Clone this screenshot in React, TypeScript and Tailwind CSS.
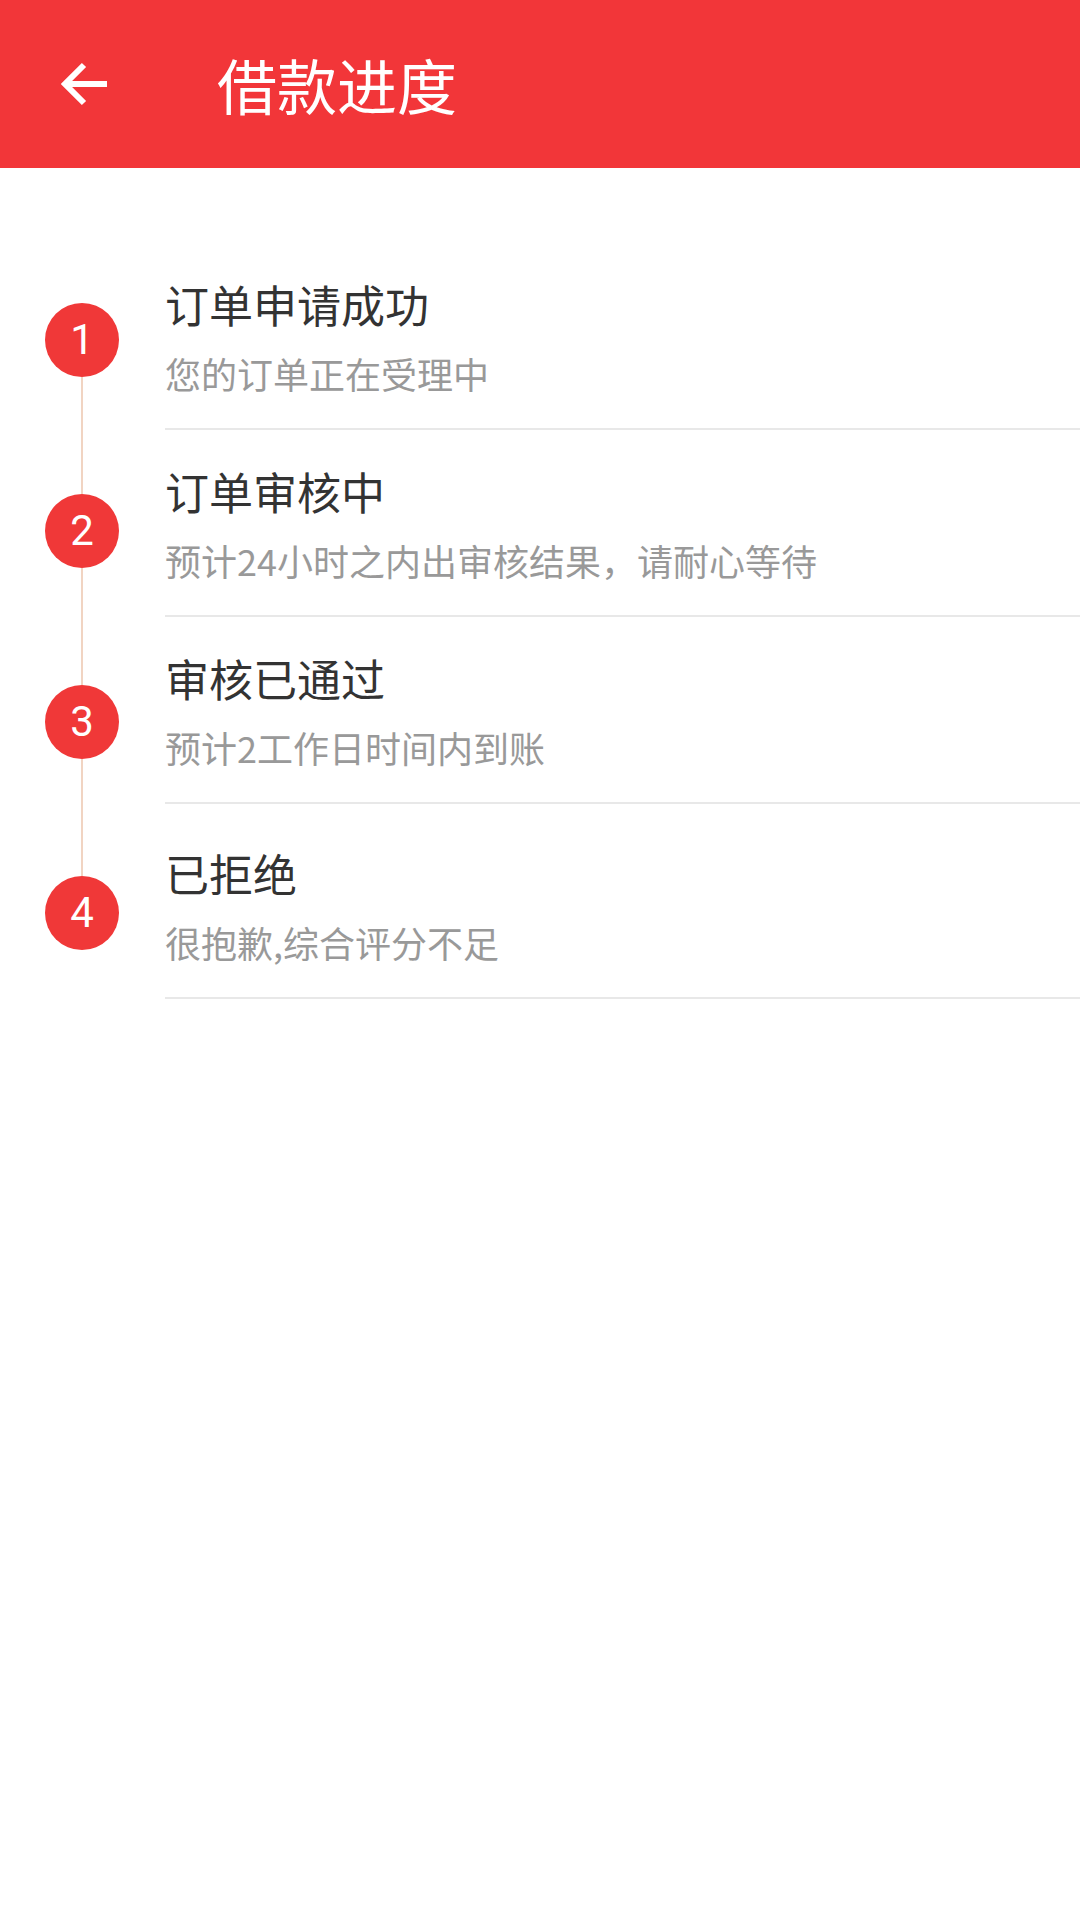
import React from 'react';

interface Step {
  no: number;
  title: string;
  desc: string;
  top: string;
}

const steps: Step[] = [
  { no: 1, title: '订单申请成功', desc: '您的订单正在受理中', top: 'pt-[40px]' },
  { no: 2, title: '订单审核中', desc: '预计24小时之内出审核结果，请耐心等待', top: 'pt-[39px]' },
  { no: 3, title: '审核已通过', desc: '预计2工作日时间内到账', top: 'pt-[39px]' },
  { no: 4, title: '已拒绝', desc: '很抱歉,综合评分不足', top: 'pt-[47px]' },
];

const cjk = { fontFamily: '"Noto Sans CJK SC", "Noto Sans", sans-serif' };

const BackArrow = () => (
  <svg width="48" height="48" viewBox="0 0 48 48" fill="none">
    <path d="M47 24H5M24 5L5 24L24 43" stroke="white" strokeWidth="6" strokeLinejoin="miter" />
  </svg>
);

const StepCircle = ({ no }: { no: number }) => (
  <div className="w-[74px] h-[74px] rounded-full bg-[#f03838] flex items-center justify-center shrink-0">
    <span className="text-white text-[42px] leading-none" style={{ fontFamily: 'Roboto, sans-serif' }}>
      {no}
    </span>
  </div>
);

export default function App() {
  return (
    <div className="w-[1080px] min-h-[1920px] bg-white" style={cjk}>
      <header className="h-[168px] bg-[#f23639] flex items-center">
        <div className="w-[217px] flex items-center pl-[60px]">
          <BackArrow />
        </div>
        <h1 className="text-white text-[60px] leading-none">借款进度</h1>
      </header>

      <div className="flex pt-[74px]">
        <div className="w-[165px] shrink-0 pl-[45px] pt-[61px] flex flex-col">
          {steps.map((s, i) => (
            <React.Fragment key={s.no}>
              <StepCircle no={s.no} />
              {i < steps.length - 1 && <div className="w-[2px] h-[117px] bg-[#f1d4c2] ml-[36px]" />}
            </React.Fragment>
          ))}
        </div>

        <div className="flex-1">
          {steps.map((s) => (
            <div key={s.no} className={`${s.top} pb-[37px] border-b-2 border-[#e8e8e8]`}>
              <div className="text-[44px] leading-none text-[#333333]">{s.title}</div>
              <div className="mt-[29px] text-[36px] leading-none text-[#999999]">{s.desc}</div>
            </div>
          ))}
        </div>
      </div>
    </div>
  );
}
